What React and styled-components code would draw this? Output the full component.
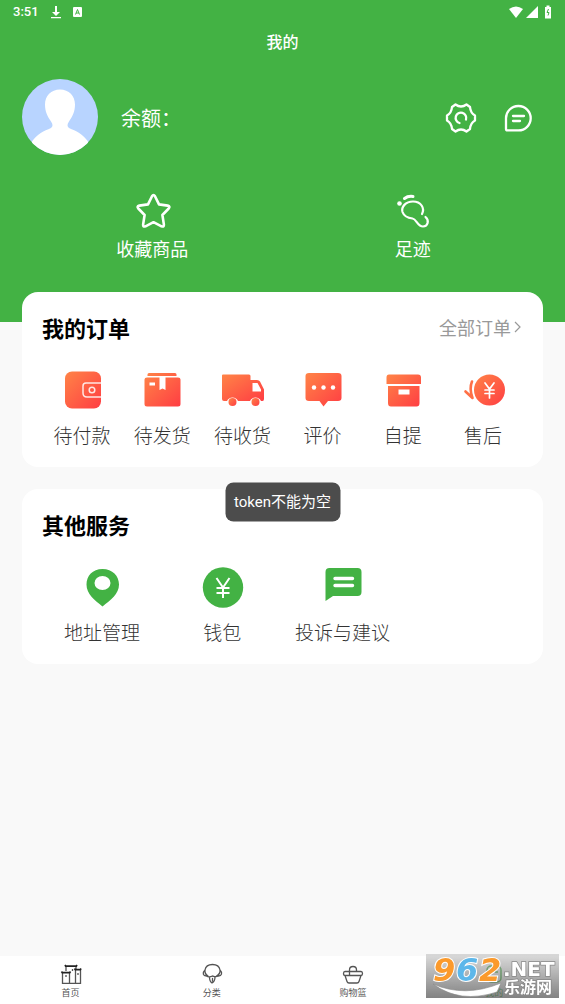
import styled, { createGlobalStyle } from "styled-components"

const GlobalStyle = createGlobalStyle`
    * {
        box-sizing: border-box;
    }
    body {
        margin: 0;
        background: #f9f9f9;
        font-family: Roboto, "Noto Sans CJK SC", sans-serif;
        color: #333;
    }
    button, a {
        border: 0;
        padding: 0;
        background: none;
        font: inherit;
        color: inherit;
        text-decoration: none;
        cursor: pointer;
    }
    h1, h2 {
        margin: 0;
    }
    svg {
        display: block;
        overflow: visible;
    }
`

const Page = styled.div`
    min-height: 100vh;
    display: flex;
    flex-direction: column;
`
const Hero = styled.header`
    height: 322px;
    background: #43b244;
    color: #fff;
`
const StatusBar = styled.div`
    height: 23px;
    padding: 0 12px 0 13px;
    display: flex;
    align-items: center;
    justify-content: space-between;
    font-size: 13px;
    font-weight: 500;
`
const StatusGroup = styled.div`
    display: flex;
    align-items: center;
    gap: ${(props) => props.$gap};
`
const PageTitle = styled.h1`
    font-size: 16px;
    line-height: 40px;
    font-weight: 500;
    text-align: center;
`
const Profile = styled.div`
    margin-top: 16px;
    padding: 0 32px 0 22px;
    display: flex;
    align-items: center;
`
const Balance = styled.span`
    flex: 1;
    margin-left: 23px;
    font-size: 20px;
`
const Tools = styled.div`
    padding-top: 2px;
    display: flex;
    gap: 24px;
`
const Shortcuts = styled.nav`
    margin: 36px 22px 0;
    display: grid;
    grid-template-columns: 1fr 1fr;
`
const Shortcut = styled.a`
    display: flex;
    flex-direction: column;
    align-items: center;
    gap: 5px;
    font-size: 18px;
    line-height: 28px;
`
const Main = styled.main`
    flex: 1;
    margin-top: -30px;
    padding: 0 22px;
    display: flex;
    flex-direction: column;
    gap: 22px;
`
const Card = styled.section`
    height: 175px;
    padding: 19px 20px;
    border-radius: 16px;
    background: #fff;
`
const CardHead = styled.div`
    display: flex;
    align-items: center;
    justify-content: space-between;
    height: 32px;
`
const CardTitle = styled.h2`
    font-size: 22px;
    font-weight: 700;
    color: #000;
`
const More = styled.a`
    display: flex;
    align-items: center;
    font-size: 18px;
    color: #999;
`
const Grid = styled.div`
    margin-top: 26px;
    display: grid;
    grid-template-columns: repeat(${(props) => props.$columns}, 1fr);
`
const GridItem = styled.a`
    display: flex;
    flex-direction: column;
    align-items: center;
    gap: 12px;
    font-size: 19px;
    line-height: 28px;
    font-weight: 300;
    white-space: nowrap;
`
const Toast = styled.div`
    position: fixed;
    top: 50%;
    left: 50%;
    transform: translate(-50%, -50%);
    padding: 9px;
    border-radius: 8px;
    background: #4c4c4c;
    color: #fff;
    font-size: 15px;
    line-height: 21px;
    white-space: nowrap;
`
const TabBar = styled.nav`
    height: 48px;
    display: grid;
    grid-template-columns: repeat(4, 1fr);
    background: #fff;
`
const Tab = styled.a`
    padding-top: 6px;
    display: flex;
    flex-direction: column;
    align-items: center;
    font-size: 9px;
    line-height: 14px;
    color: ${(props) => (props.$active ? "#43b244" : "#555")};
`
const Watermark = styled.div`
    position: fixed;
    right: 6px;
    bottom: 6px;
    width: 133px;
    height: 44px;
    background: linear-gradient(rgba(184, 184, 184, 0.5), rgba(88, 88, 88, 0.75));
`

const Gradient = ({ id }) => (
    <defs>
        <linearGradient id={id} x1="0" y1="0" x2="1" y2="1">
            <stop offset="0" stopColor="#ff8447" />
            <stop offset="1" stopColor="#ff3d43" />
        </linearGradient>
    </defs>
)

const Avatar = () => (
    <svg width="76" height="76" viewBox="0 0 76 76" aria-hidden="true">
        <clipPath id="face"><circle cx="38" cy="38" r="38" /></clipPath>
        <circle cx="38" cy="38" r="38" fill="#b8d4ff" />
        <path clipPath="url(#face)" fill="#fff" d="M38 10.500c-9 0-15 6.500-15 15 0 7 2.500 12 6 17 2 3 2 5 0 6.500-7 3-14 6-19 13.500V76h56V62.500C61 55 54 52 47 49c-2-1.500-2-3.500 0-6.500 3.500-5 6-10 6-17 0-8.500-6-15-15-15z" />
    </svg>
)

const StarIcon = () => (
    <svg width="40" height="40" viewBox="0 0 40 40" fill="none" stroke="#fff" strokeWidth="2.600" strokeLinejoin="round">
        <path d="M20 5.200q1.500-2.400 3 0l4 8.200 8.700 1.200q2.800.7 1 2.900l-6.300 6.500 1.500 9.600q.2 2.700-2.400 1.700l-8-4.100-8 4.100q-2.600 1-2.400-1.700L12.600 24l-6.300-6.500q-1.800-2.200 1-2.900l8.700-1.200z" />
    </svg>
)

const FootIcon = () => (
    <svg width="40" height="40" viewBox="0 0 40 40" fill="none" stroke="#fff" strokeWidth="2.200" strokeLinecap="round">
        <circle cx="6.500" cy="12.500" r="2.300" fill="#fff" stroke="none" />
        <path d="M11.500 7.500Q15 4.800 20 5.500" strokeWidth="3" />
        <path d="M29 23C32 17 28 10.500 20 10.500 12.500 10.500 8 16 9.500 21c1.600 4.500 5.500 6 10 6.500 4 .5 5 8 10.500 8 5 0 6.500-6 2.500-9.500" />
    </svg>
)

const GearIcon = () => (
    <svg width="32" height="32" viewBox="0 0 32 32" fill="none" stroke="#fff" strokeWidth="2.300" strokeLinecap="round" strokeLinejoin="round">
        <path d="M10.500 2.500Q16 6.500 21.500 2.500L25 5Q25.500 11 30 13.500V18.500Q25.500 21 25 27L21.500 29.500Q16 25.500 10.500 29.500L7 27Q6.500 21 2 18.500V13.500Q6.500 11 7 5z" />
        <path d="M14.500 21A5.300 5.300 0 1 1 21 17.500" />
    </svg>
)

const MessageIcon = () => (
    <svg width="32" height="32" viewBox="0 0 32 32" fill="none" stroke="#fff" strokeWidth="2.300" strokeLinecap="round" strokeLinejoin="round">
        <path d="M17.500 4A12.200 12.200 0 0 1 17.500 28.400H6.500Q5 28.400 5 27V16.200A12.300 12.300 0 0 1 17.500 4z" />
        <path d="M12 14h11M12 19h7" />
    </svg>
)

const WalletIcon = () => (
    <svg width="42" height="42" viewBox="0 0 42 42">
        <Gradient id="wallet" />
        <rect x="4" y="2.500" width="36" height="37" rx="7" fill="url(#wallet)" />
        <path d="M40 14H25q-3 0-3 3v7q0 4 4 4h14" fill="none" stroke="#fff" strokeOpacity="0.850" strokeWidth="1.500" />
        <circle cx="31" cy="21" r="2.800" fill="none" stroke="#fff" strokeOpacity="0.850" strokeWidth="1.500" />
    </svg>
)

const BoxIcon = () => (
    <svg width="42" height="42" viewBox="0 0 42 42">
        <Gradient id="box" />
        <path fill="url(#box)" d="M8 4h26q1.500 0 1.500 1.500V7h-29V5.500Q6.500 4 8 4zM6 8.500h12.500V21l3-1.500 3 1.500V8.500H37q2.500 0 2.500 2V35q0 2.500-2.500 2.500H6Q3.500 37.500 3.500 35V10.500q0-2 2.500-2zM8.500 13.500v3h5.500v-3z" fillRule="evenodd" />
    </svg>
)

const TruckIcon = () => (
    <svg width="44" height="42" viewBox="0 0 44 42">
        <Gradient id="truck" />
        <g fill="url(#truck)">
            <path fillRule="evenodd" d="M3 5.500h26q1.500 0 1.500 1.500v4H37q2 0 3 1.500l4 8V30q0 2-1.500 2h-1.500a6 6 0 0 0-11 0H18a6 6 0 0 0-11 0H4q-2 0-2-2V6.500q0-1 1-1zM32.500 14v8.500H41v-2L37.500 14z" />
            <circle cx="12.500" cy="33" r="4" />
            <circle cx="35.500" cy="33" r="4" />
        </g>
    </svg>
)

const ReviewIcon = () => (
    <svg width="42" height="42" viewBox="0 0 42 42">
        <Gradient id="review" />
        <path fill="url(#review)" d="M7 4h29q3.500 0 3.500 3v22q0 3-3.500 3H26l-4.500 5.500L17.500 32H7q-3.500 0-3.500-3V7q0-3 3.500-3z" />
        <g fill="#fff">
            <circle cx="12" cy="18.500" r="2.200" />
            <circle cx="21.500" cy="18.500" r="2.200" />
            <circle cx="31" cy="18.500" r="2.200" />
        </g>
    </svg>
)

const ArchiveIcon = () => (
    <svg width="42" height="42" viewBox="0 0 42 42">
        <Gradient id="archive" />
        <path fill="url(#archive)" fillRule="evenodd" d="M7 5.500h29q3 0 3 3V15H4.500V8.500q0-3 2.500-3zM6 17h31.500v17q0 3.500-3 3.500H9q-3 0-3-3.500zM16.500 20.500v5h11v-5z" />
    </svg>
)

const RefundIcon = () => (
    <svg width="44" height="42" viewBox="0 0 44 42">
        <Gradient id="refund" />
        <circle cx="28.500" cy="21" r="15.500" fill="url(#refund)" />
        <path d="M24 14l4.500 6 4.500-6M28.500 20v9M24 21h9M24 24.500h9" fill="none" stroke="#fff" strokeWidth="1.700" strokeLinecap="round" />
        <path d="M11 12.500Q8 19.500 11.500 29L4.500 22.500" fill="none" stroke="#ff7046" strokeWidth="2.600" strokeLinecap="round" strokeLinejoin="round" />
    </svg>
)

const PinIcon = () => (
    <svg width="42" height="42" viewBox="0 0 42 42">
        <path fill="#43b244" fillRule="evenodd" d="M21.500 3C11.500 3 5.500 10 5.500 18.500 5.500 28 13.500 34 21.500 40.500 29.500 34 38 28 38 18.500 38 10 31.500 3 21.500 3zM21.500 10a8 7 0 1 1 0 14 8 7 0 1 1 0-14z" />
    </svg>
)

const YenIcon = () => (
    <svg width="42" height="42" viewBox="0 0 42 42">
        <circle cx="22" cy="21.500" r="20.200" fill="#43b244" />
        <path d="M15.500 12l6.500 9.500 6.500-9.500M22 21.500V32M15.500 22h13M15.500 27h13" fill="none" stroke="#fff" strokeWidth="2" />
    </svg>
)

const AdviceIcon = () => (
    <svg width="42" height="42" viewBox="0 0 42 42">
        <path fill="#43b244" d="M7.500 2h28q4 0 4 4v20q0 4-4 4H11l-7.500 5V6q0-4 4-4z" />
        <path d="M13 12.500h17.500M13 19.500h17.500" stroke="#fff" strokeWidth="3.400" strokeLinecap="round" />
    </svg>
)

const HomeIcon = () => (
    <svg width="24" height="24" viewBox="0 0 24 24" fill="none" stroke="#555" strokeWidth="1.300">
        <path d="M3.500 11v10.400h18V8M10.500 21V11M16.500 21V8M7 9V4.500M17 7V4.500M7 13v2M13.500 7v2M19 11v2" />
        <path d="M6 3l.7 1.200h10.600L18 3M2.500 9.500l.8 1.200h7.400l.8-1.200M15.500 6.500l.8 1.200h5l.8-1.200" stroke="#222" strokeWidth="1.700" />
    </svg>
)

const CategoryIcon = () => (
    <svg width="24" height="24" viewBox="0 0 24 24" fill="none" stroke="#555" strokeWidth="1.300" strokeLinecap="round" strokeLinejoin="round">
        <path d="M6.500 14C3 14 2 11 5 8c.5-3 3-5.500 7.500-5.500S19.500 5 20 8c3 3 1.500 6-1.500 6-3 1.500-4 .5-6 0-2 1-4 1.500-6 0zM5 8q-.5 4 3 6M20 8q.5 4-3.500 6M9.500 15q0 4.500 2.500 6 3-1.500 3-6M12.500 16.500v2.500" />
    </svg>
)

const BasketIcon = () => (
    <svg width="24" height="24" viewBox="0 0 24 24" fill="none" stroke="#555" strokeWidth="1.300" strokeLinejoin="round">
        <path d="M4 9.500h16q1.500 0 1.500 2t-1.500 2H4q-1.500 0-1.500-2t1.500-2zM4 13.500l2 6q.5 1.500 2 1.500h8q1.500 0 2-1.500l2-6M8.500 13V8q0-3.500 3.500-3.500T15.500 8v1.500" />
    </svg>
)

const UserIcon = () => (
    <svg width="24" height="24" viewBox="0 0 24 24" fill="none" stroke="#43b244" strokeWidth="1.500">
        <rect x="5" y="4" width="14" height="16" rx="4" />
        <path d="M8 10h3M13 10h3M8 16h8" />
    </svg>
)

const SiteLogo = () => (
    <svg width="133" height="44" viewBox="0 0 133 44" role="img" aria-label="962.NET 乐游网">
        <path d="M7 30q32 14 68-1l-4 9Q34 50 7 30z" fill="#fff" stroke="#888" strokeWidth="0.600" />
        <g fontFamily="DejaVu Sans, sans-serif" fontSize="32" fontWeight="700" fontStyle="italic" stroke="#fff" strokeWidth="2" paintOrder="stroke">
            <text x="7" y="27" fill="#fb9a2c">9</text>
            <text x="30" y="27" fill="#5db7ea">6</text>
            <text x="53" y="27" fill="#fb9a2c">2</text>
        </g>
        <g fill="#fff" stroke="#888" strokeWidth="1.500" paintOrder="stroke">
            <text x="77" y="22" fontSize="20" fontWeight="700" fontFamily="DejaVu Sans, sans-serif">.NET</text>
            <text x="78" y="39" fontSize="16" fontWeight="700" fontFamily="Noto Sans CJK SC, sans-serif">乐游网</text>
        </g>
    </svg>
)

const orders = [
    { name: "待付款", icon: <WalletIcon /> },
    { name: "待发货", icon: <BoxIcon /> },
    { name: "待收货", icon: <TruckIcon /> },
    { name: "评价", icon: <ReviewIcon /> },
    { name: "自提", icon: <ArchiveIcon /> },
    { name: "售后", icon: <RefundIcon /> },
]

const services = [
    { name: "地址管理", icon: <PinIcon /> },
    { name: "钱包", icon: <YenIcon /> },
    { name: "投诉与建议", icon: <AdviceIcon /> },
]

const tabs = [
    { name: "首页", icon: <HomeIcon /> },
    { name: "分类", icon: <CategoryIcon /> },
    { name: "购物篮", icon: <BasketIcon /> },
    { name: "我的", icon: <UserIcon />, active: true },
]

const App = () => {
    return (
        <Page>
            <GlobalStyle />
            <Hero>
                <StatusBar>
                    <StatusGroup $gap="12px">
                        <span>3:51</span>
                        <svg width="10" height="14" viewBox="0 0 10 14" fill="#fff"><path d="M4 1h2v6h3l-4 4-4-4h3zM0 12h10v1.300H0z" /></svg>
                        <svg width="10" height="12" viewBox="0 0 10 12"><rect y="1" width="9" height="10" rx="1" fill="#fff" /><path d="M2.500 8.500l2-5 2 5M3 7h3" stroke="#43b244" fill="none" /></svg>
                    </StatusGroup>
                    <StatusGroup $gap="3px">
                        <svg width="14" height="12" viewBox="0 0 14 12" fill="#fff"><path d="M0 3q7-5 14 0L7 12z" /></svg>
                        <svg width="12" height="12" viewBox="0 0 12 12" fill="#fff"><path d="M12 0v12H0z" /></svg>
                        <svg width="12" height="14" viewBox="0 0 12 14"><path d="M4 2h1.500V.500h3V2H10v11.500H4z" fill="#fff" /><path d="M7.500 4L6 7.500h2l-1 3" stroke="#43b244" fill="none" /></svg>
                    </StatusGroup>
                </StatusBar>
                <PageTitle>我的</PageTitle>
                <Profile>
                    <Avatar />
                    <Balance>余额：</Balance>
                    <Tools>
                        <button aria-label="设置"><GearIcon /></button>
                        <button aria-label="消息"><MessageIcon /></button>
                    </Tools>
                </Profile>
                <Shortcuts>
                    <Shortcut href="#favorites"><StarIcon />收藏商品</Shortcut>
                    <Shortcut href="#footprints"><FootIcon />足迹</Shortcut>
                </Shortcuts>
            </Hero>
            <Main>
                <Card>
                    <CardHead>
                        <CardTitle>我的订单</CardTitle>
                        <More href="#orders">
                            全部订单
                            <svg width="12" height="14" viewBox="0 0 12 14" fill="none" stroke="#999" strokeWidth="1.200"><path d="M4 2l5 5-5 5" /></svg>
                        </More>
                    </CardHead>
                    <Grid $columns={6}>
                        {orders.map((item) => (
                            <GridItem key={item.name} href="#orders">{item.icon}{item.name}</GridItem>
                        ))}
                    </Grid>
                </Card>
                <Card>
                    <CardHead>
                        <CardTitle>其他服务</CardTitle>
                    </CardHead>
                    <Grid $columns={4}>
                        {services.map((item) => (
                            <GridItem key={item.name} href="#services">{item.icon}{item.name}</GridItem>
                        ))}
                    </Grid>
                </Card>
            </Main>
            <TabBar>
                {tabs.map((tab) => (
                    <Tab key={tab.name} href="#tab" $active={tab.active}>{tab.icon}{tab.name}</Tab>
                ))}
            </TabBar>
            <Toast role="status">token不能为空</Toast>
            <Watermark><SiteLogo /></Watermark>
        </Page>
    )
}

export default App
